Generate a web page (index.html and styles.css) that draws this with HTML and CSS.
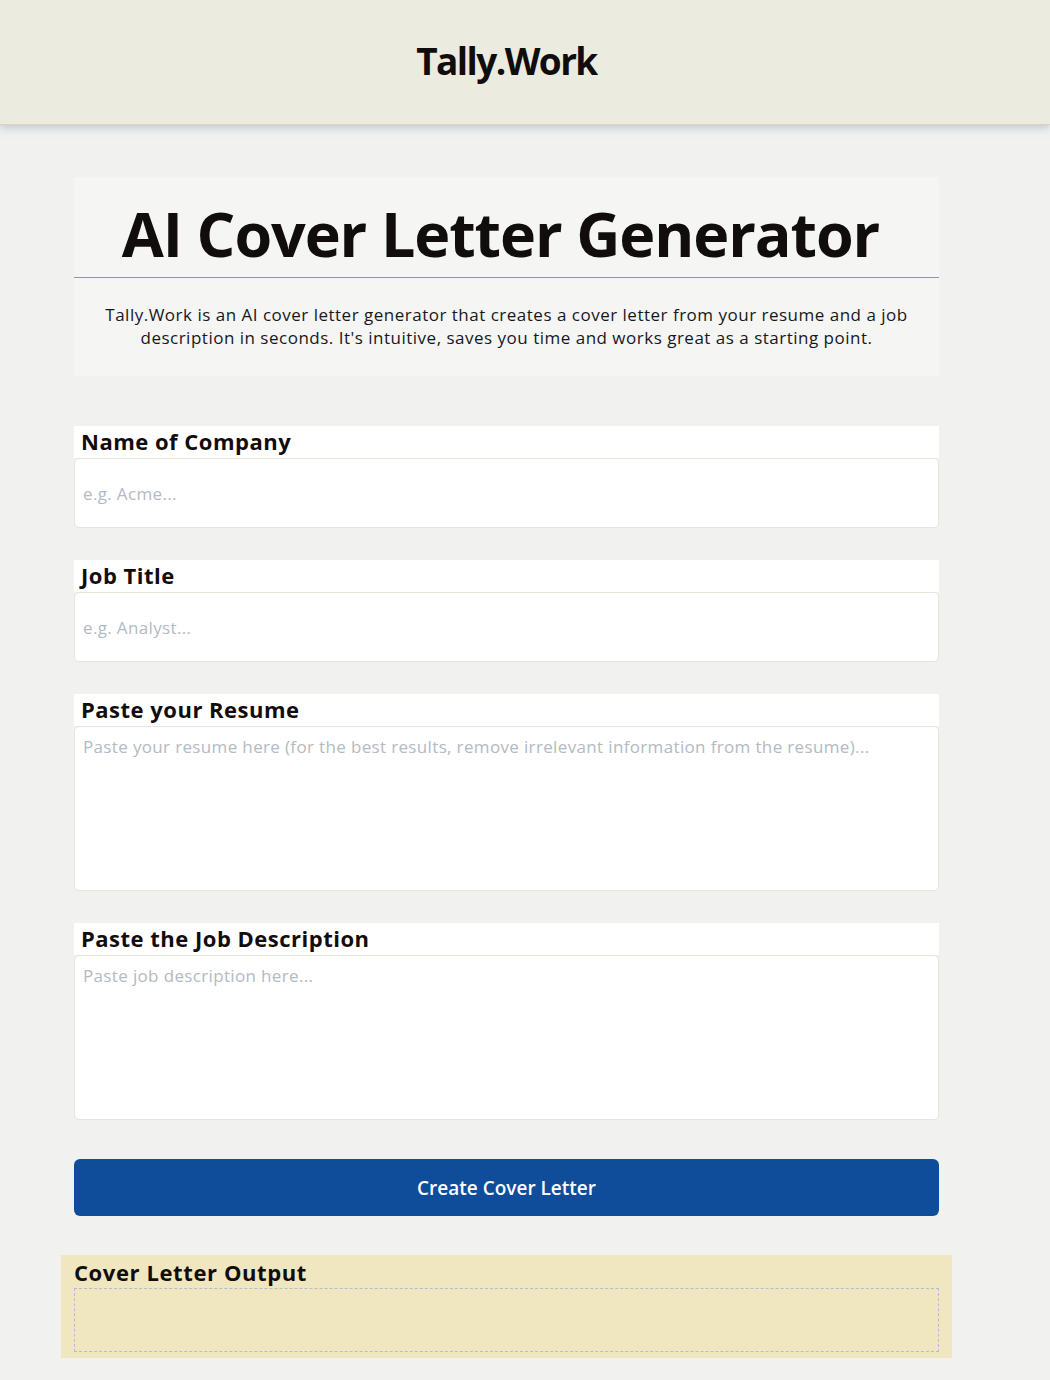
FILE: index.html
```html
<!DOCTYPE html>
<html lang="en">
<head>
<meta charset="utf-8">
<title>Tally.Work - AI Cover Letter Generator</title>
<link rel="stylesheet" href="styles.css">
</head>
<body>
<header class="site-header">
  <div class="site-inner">
    <div class="brand">Tally.Work</div>
  </div>
</header>
<main class="site-inner main">
  <section class="hero">
    <h1 class="hero-title">AI Cover Letter Generator</h1>
    <p class="hero-text">Tally.Work is an AI cover letter generator that creates a cover letter from your resume and a job description in seconds. It's intuitive, saves you time and works great as a starting point.</p>
  </section>

  <form class="form">
    <div class="field">
      <label class="field-label">Name of Company</label>
      <input class="field-input" type="text" placeholder="e.g. Acme...">
    </div>
    <div class="field">
      <label class="field-label">Job Title</label>
      <input class="field-input" type="text" placeholder="e.g. Analyst...">
    </div>
    <div class="field">
      <label class="field-label">Paste your Resume</label>
      <textarea class="field-area" placeholder="Paste your resume here (for the best results, remove irrelevant information from the resume)..."></textarea>
    </div>
    <div class="field">
      <label class="field-label">Paste the Job Description</label>
      <textarea class="field-area" placeholder="Paste job description here..."></textarea>
    </div>
    <button class="submit" type="button">Create Cover Letter</button>
  </form>

  <section class="output">
    <h2 class="output-title">Cover Letter Output</h2>
    <div class="output-box"></div>
  </section>
</main>
</body>
</html>
```
FILE: styles.css
```css
* { box-sizing: border-box; }
html, body { margin: 0; padding: 0; }
body {
  background: #f1f1ef;
  font-family: "Open Sans", "Noto Sans", sans-serif;
  color: #120d0d;
}
.site-inner {
  width: 1013px;
}
.site-header {
  background: #ebebdf;
  height: 125px;
  border-bottom: 1px solid #d9d6c0;
  box-shadow: 0 3px 8px rgba(150, 165, 190, 0.55);
  position: relative;
}
.site-header .site-inner {
  height: 124px;
  display: flex;
  align-items: center;
  justify-content: center;
}
.brand {
  font-size: 37px;
  font-weight: 700;
  letter-spacing: -1.6px;
  color: #120d0d;
  margin-top: -3px;
}
.main {
  padding: 52px 74px 20px;
}
.hero {
  background: #f5f5f4;
  padding: 18px 0 27px;
  text-align: center;
}
.hero-title {
  margin: 0;
  font-size: 61px;
  font-weight: 700;
  letter-spacing: -1.1px;
  line-height: 78px;
  padding: 0 12px 4px 0;
  border-bottom: 1px solid #8b97a8;
}
.hero-text {
  margin: 25px 0 0;
  padding: 0 20px;
  font-size: 17px;
  letter-spacing: 0.5px;
  line-height: 23px;
  color: #16181c;
}
.form {
  margin-top: 50px;
  display: flex;
  flex-direction: column;
}
.field {
  display: flex;
  flex-direction: column;
  margin-bottom: 32px;
}
.field-label {
  background: #ffffff;
  font-size: 22px;
  font-weight: 700;
  letter-spacing: 0.5px;
  line-height: 31px;
  height: 32px;
  padding: 0 7px;
  color: #120d0d;
}
.field-input,
.field-area {
  background: #ffffff;
  border: 1px solid #e6e6d8;
  border-radius: 5px;
  font-family: "Open Sans", "Noto Sans", sans-serif;
  font-size: 17px;
  letter-spacing: 0.35px;
  color: #333;
  padding: 0 8px;
  outline: none;
  width: 100%;
}
.field-input {
  height: 70px;
}
.field-area {
  height: 165px;
  padding-top: 8px;
  resize: none;
}
.field-input::placeholder,
.field-area::placeholder {
  color: #b3bac3;
}
.submit {
  margin-top: 7px;
  height: 57px;
  background: #0f4c9a;
  color: #ffffff;
  border: none;
  border-radius: 6px;
  font-family: "Open Sans", "Noto Sans", sans-serif;
  font-size: 19px;
  font-weight: 600;
  cursor: pointer;
}
.output {
  margin: 39px -13px 0;
  background: #f0e6c0;
  padding: 2px 13px 6px;
}
.output-title {
  margin: 0;
  font-size: 22px;
  font-weight: 700;
  letter-spacing: 0.6px;
  line-height: 30px;
  color: #120d0d;
}
.output-box {
  height: 64px;
  border: 1px dashed #b2bdd0;
  margin-top: 1px;
}
```
